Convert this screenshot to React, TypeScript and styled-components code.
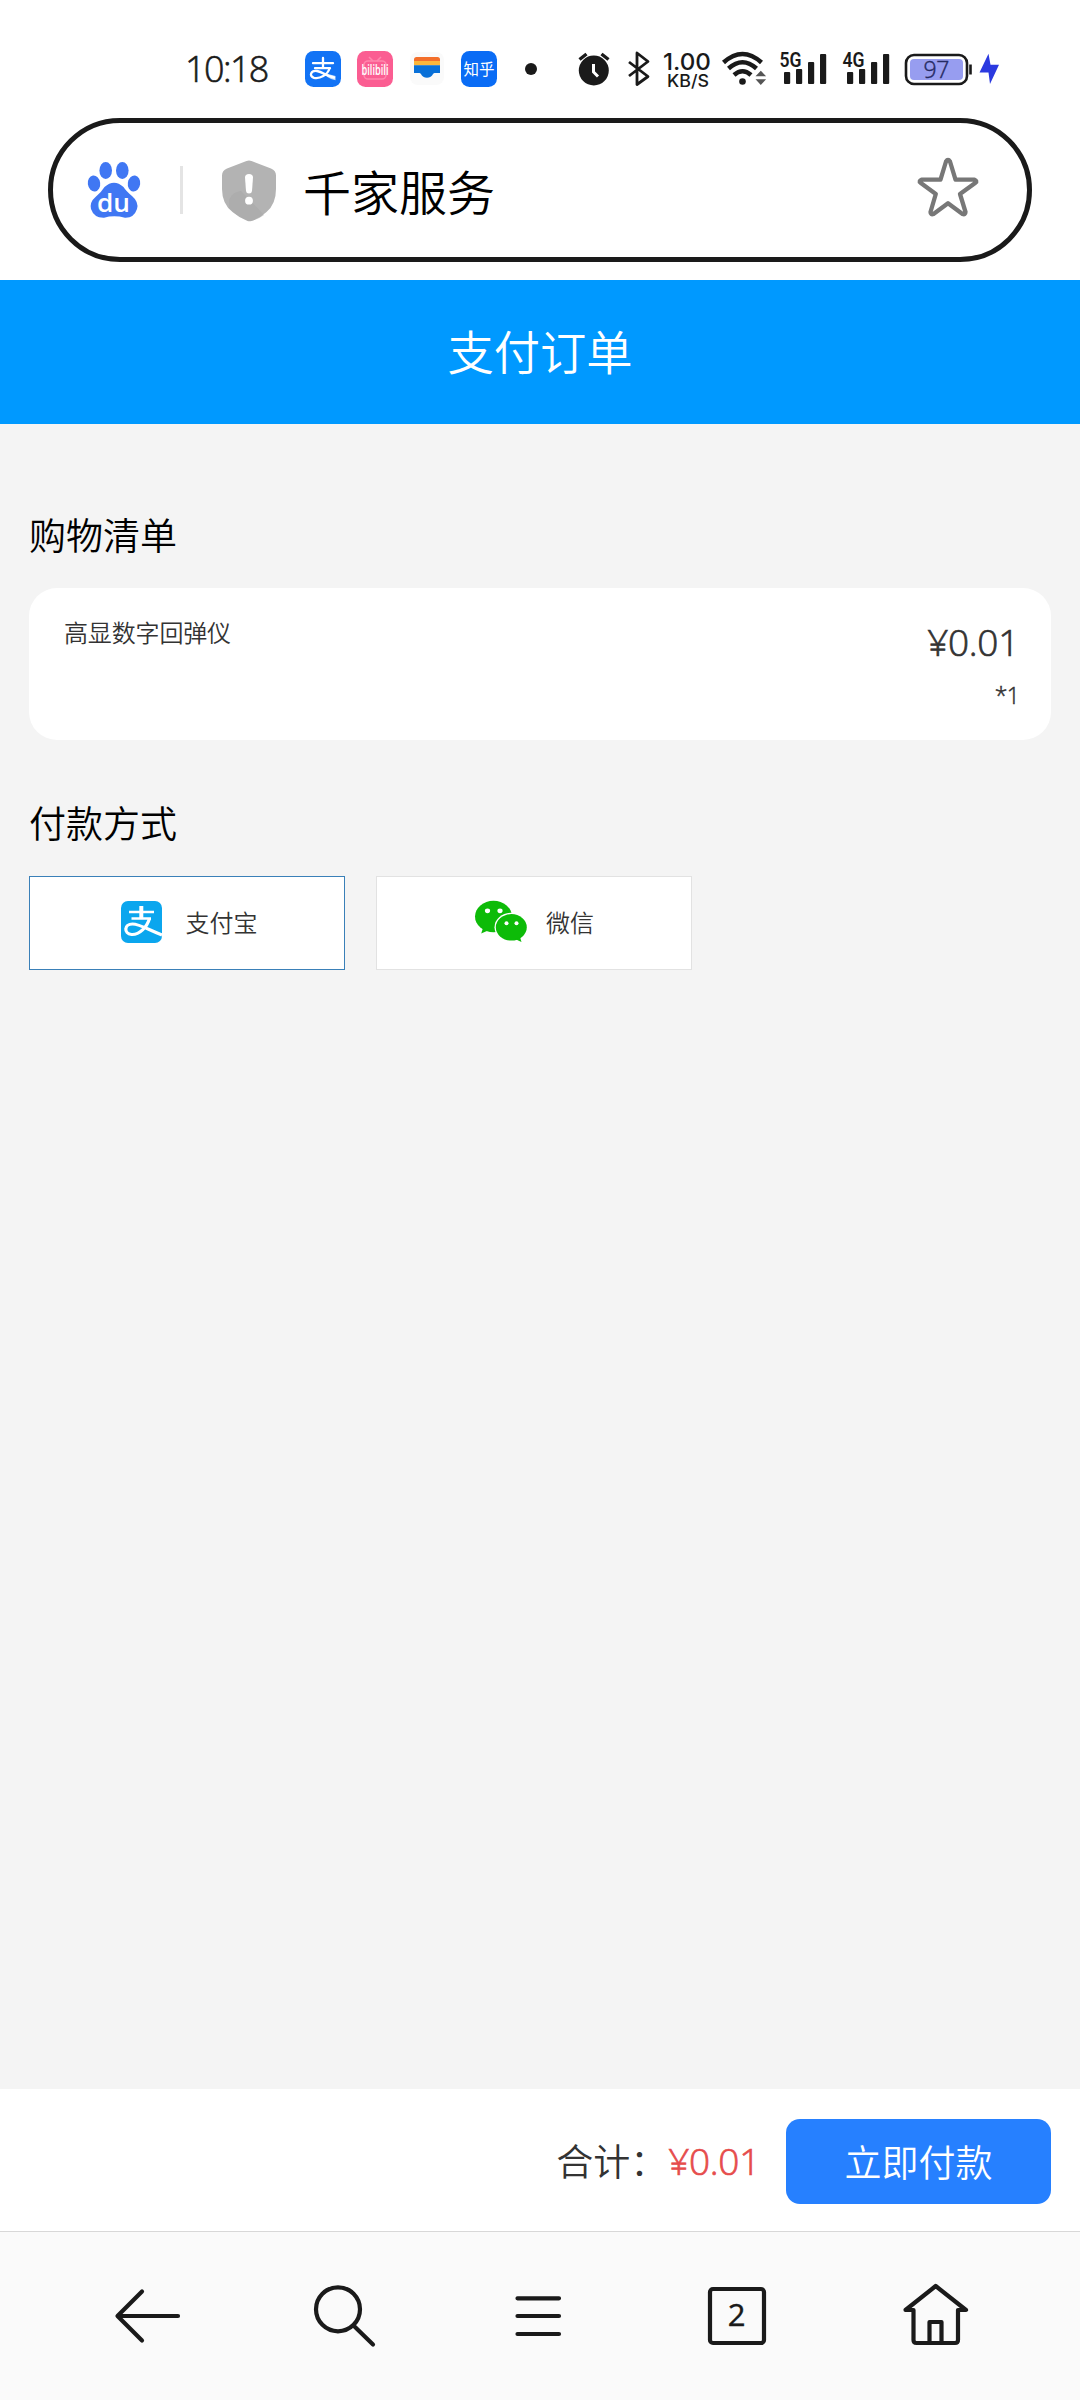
import React from "react";
import styled, { createGlobalStyle } from "styled-components";

const GlobalStyle = createGlobalStyle`
  * { box-sizing: border-box; }
  body {
    margin: 0;
    background: #f4f4f4;
    font-family: "Noto Sans", "Noto Sans CJK SC", sans-serif;
    font-weight: 350;
    color: #333;
  }
  button { font: inherit; padding: 0; border: 0; background: none; color: inherit; }
  svg { display: block; flex: none; overflow: visible; }
`;

const Screen = styled.div`
  display: flex;
  flex-direction: column;
  width: 1080px;
  height: 2400px;
  overflow: hidden;
`;

const Chrome = styled.header`
  height: 280px;
  background: #fff;
  padding: 50px 48px 0;
`;

const StatusBar = styled.div`
  display: flex;
  align-items: center;
  height: 38px;
  margin-bottom: 30px;
  padding-left: 137px;
  color: #1a1a1a;
`;

const Clock = styled.time`
  width: 120px;
  font-family: "Open Sans", sans-serif;
  font-size: 36px;
  line-height: 38px;
  letter-spacing: -1.6px;
  -webkit-text-stroke: 0.6px currentColor;
`;

const AppIcons = styled.div`
  display: flex;
  gap: 16px;
  width: 270px;
`;

const SearchBox = styled.div`
  display: flex;
  align-items: center;
  height: 144px;
  border: 5px solid #1a1a1a;
  border-radius: 72px;
  padding: 0 48px 0 33px;
`;

const Divider = styled.span`
  width: 3px;
  height: 48px;
  margin: 0 39px 0 38px;
  background: #e4e4e4;
`;

const SiteName = styled.span`
  flex: 1;
  margin-left: 27px;
  font-size: 48px;
  line-height: 60px;
  color: #000;
  padding-top: 6px;
`;

const TitleBar = styled.h1`
  display: flex;
  align-items: center;
  justify-content: center;
  height: 144px;
  margin: 0;
  padding-bottom: 4px;
  background: #0099ff;
  color: #fff;
  font-size: 46.3px;
  font-weight: 350;
`;

const Content = styled.main`
  flex: 1;
  padding: 84px 29px 0;
`;

const SectionTitle = styled.h2`
  margin: 0;
  height: 80px;
  line-height: 56px;
  font-size: 37px;
  font-weight: 350;
  color: #000;
`;

const ItemCard = styled.section`
  display: flex;
  justify-content: space-between;
  height: 152px;
  margin-bottom: 56px;
  padding: 26px 32px 0 35px;
  border-radius: 28px;
  background: #fff;
`;

const ItemName = styled.span`
  font-size: 24px;
  line-height: 38px;
  letter-spacing: -0.15px;
`;

const ItemFigures = styled.div`
  display: flex;
  flex-direction: column;
  align-items: flex-end;
  font-family: "Open Sans", sans-serif;
`;

const Price = styled.span<{ $accent?: boolean }>`
  font-family: "Open Sans", sans-serif;
  font-size: 37px;
  line-height: 56px;
  letter-spacing: -0.3px;
  color: ${(p) => (p.$accent ? "#e64c4c" : "#333")};
  -webkit-text-stroke: 0.7px currentColor;
`;

const Quantity = styled.span`
  font-size: 23px;
  line-height: 50px;
  letter-spacing: -0.8px;
  -webkit-text-stroke: 0.5px currentColor;
`;

const Methods = styled.div`
  display: flex;
  gap: 31px;
`;

const Method = styled.button<{ $selected?: boolean; $gap: number }>`
  display: flex;
  align-items: center;
  justify-content: center;
  gap: ${(p) => p.$gap}px;
  width: 316px;
  height: 94px;
  padding: 0 0 3px ${(p) => (p.$selected ? 4 : 1)}px;
  background: #fff;
  border: 1px solid ${(p) => (p.$selected ? "#3a80b8" : "#e2e2e2")};
  font-size: 24px;
`;

const PayBar = styled.footer`
  display: flex;
  align-items: center;
  justify-content: flex-end;
  height: 142px;
  padding-right: 29px;
  padding-top: 2px;
  background: #fff;
`;

const TotalLabel = styled.span`
  font-size: 37px;
  line-height: 56px;
  padding: 2px 1px 0 0;
`;

const PayButton = styled.button`
  width: 265px;
  height: 85px;
  margin-left: 26px;
  border-radius: 14px;
  background: #2680ff;
  color: #fff;
  font-size: 37px;
`;

const NavBar = styled.nav`
  display: grid;
  grid-template-columns: repeat(5, 196px);
  justify-content: center;
  align-items: center;
  justify-items: center;
  height: 169px;
  border-top: 1px solid #d8d8d8;
  background: #fafafa;
`;

const StarSlot = styled.span`
  padding-bottom: 6px;
`;

const AppTile = ({ fill, children }: { fill: string; children: React.ReactNode }) => (
  <svg width="36" height="36" viewBox="0 0 36 36">
    <rect width="36" height="36" rx="8.5" fill={fill} />
    {children}
  </svg>
);

const AlipayTile = () => (
  <AppTile fill="#1273f5">
    <g fill="none" stroke="#fff" strokeWidth="2.3" strokeLinecap="round">
      <path d="M8 12.2H28M18 7v10M10 17.2H25" />
      <path d="M24.5 17.5C22.5 24 15 28 9 26.8C3.500 25 6 19 12 20C18 21 22 25.500 29 26.500" />
    </g>
    <path d="M23 23l7.500 2v4.300q-5-1-9-3.800z" fill="#fff" opacity=".75" />
  </AppTile>
);

const BilibiliTile = () => (
  <AppTile fill="#fb5d92">
    <g fill="none" stroke="#ff86ad" strokeWidth="1.6">
      <rect x="7" y="10" width="22" height="18" rx="4" />
      <path d="M12 6l4 4M24 6l-4 4" />
    </g>
    <text x="18" y="24" textAnchor="middle" textLength="27" lengthAdjust="spacingAndGlyphs" fill="#fff" fontFamily="Open Sans, sans-serif" fontWeight="600" fontSize="15">bilibili</text>
  </AppTile>
);

const WalletTile = () => (
  <svg width="36" height="36" viewBox="0 0 36 36">
    <rect x="1" y="1" width="34" height="33" rx="8" fill="#fafafa" />
    <path d="M5 11V8.500q0-2.500 2.500-2.500h21q2.500 0 2.500 2.500V11z" fill="#f36f2b" />
    <path d="M5 10h26v4.500H5z" fill="#fcb73a" />
    <path d="M5 14.200h26V22h-5.500c-2 0-2 4.800-7.500 4.800s-5.500-4.800-7.500-4.800H5z" fill="#0870d8" />
  </svg>
);

const ZhihuTile = () => (
  <AppTile fill="#0a6cf5">
    <text x="18" y="23.600" textAnchor="middle" fill="#fff" fontFamily="Noto Sans CJK SC, sans-serif" fontWeight="400" fontSize="15.500">知乎</text>
  </AppTile>
);

const SignalBars = ({ x, label }: { x: number; label: string }) => (
  <g>
    <text x={x - 4.500} y="67" textLength="22" lengthAdjust="spacingAndGlyphs" fontFamily="Roboto, sans-serif" fontWeight="600" fontSize="20.500">{label}</text>
    <rect x={x} y="72" width="6.200" height="12" rx="1" />
    <rect x={x + 12} y="69" width="6.200" height="15" rx="1" />
    <rect x={x + 24} y="62" width="6.200" height="22" rx="1" />
    <rect x={x + 36} y="54" width="6.200" height="30" rx="1" />
  </g>
);

const SystemIcons = () => (
  <svg width="430" height="38" viewBox="575 50 430 38" fill="#1a1a1a">
    <circle cx="593.800" cy="70.500" r="15" />
    <path d="M579.500 59.500l7-5.500M608.500 59.500l-7-5.500" stroke="#1a1a1a" strokeWidth="3.400" />
    <path d="M593.500 64v8l4.500 4.500" fill="none" stroke="#fff" strokeWidth="3" />
    <path d="M629 62l19 14.500l-11 8V53l11 8.500L629 76" fill="none" stroke="#1a1a1a" strokeWidth="2.800" strokeLinejoin="round" />
    <text x="663" y="70.300" textLength="48" lengthAdjust="spacingAndGlyphs" fontFamily="Inter, sans-serif" fontWeight="500" fontSize="23.500">1.00</text>
    <text x="667" y="86.700" textLength="42" lengthAdjust="spacingAndGlyphs" fontFamily="Inter, sans-serif" fontWeight="500" fontSize="17">KB/S</text>
    <g fill="none" stroke="#1a1a1a" strokeWidth="4.500">
      <path d="M723.500 62.500Q742.500 45.500 761.500 62.500" />
      <path d="M728.500 68.500Q742.500 56 756.500 68.500" />
      <path d="M734 75Q742.500 67.500 751 75" />
    </g>
    <circle cx="742.500" cy="81.500" r="3.300" />
    <path d="M755.500 76.200l5.300-5.500l5.300 5.500zM755.500 79.300l5.300 5.700l5.300-5.700z" fill="#555" />
    <SignalBars x={784} label="5G" />
    <SignalBars x={847} label="4G" />
    <rect x="906" y="55" width="61" height="29" rx="8" fill="#fff" stroke="#1a1a1a" strokeWidth="2.600" />
    <rect x="910" y="59" width="53" height="21" rx="4" fill="#979df0" />
    <path d="M970.500 64.500v10" stroke="#1a1a1a" strokeWidth="2.600" />
    <text x="936.500" y="78" textAnchor="middle" textLength="26" fill="#252a63" stroke="#252a63" strokeWidth="0.400" fontFamily="Open Sans, sans-serif" fontWeight="350" fontSize="23">97</text>
    <path d="M988.500 53.800L979.500 72.500h9L990 84l9-19.300h-8.500z" fill="#2b3ae0" />
  </svg>
);

const BaiduLogo = () => (
  <svg width="56" height="60" viewBox="86 160 56 60" fill="#4077f3">
    <ellipse cx="105.700" cy="170.500" rx="6.300" ry="8.500" />
    <ellipse cx="122.300" cy="170.500" rx="6.300" ry="8.500" />
    <ellipse cx="94" cy="183.500" rx="6.200" ry="8" transform="rotate(-8 94 183.500)" />
    <ellipse cx="134" cy="183.500" rx="6.200" ry="8" transform="rotate(8 134 183.500)" />
    <path d="M104.500 187Q114 178.500 123.500 187Q126 191 132 196Q139 202 137 209Q134 218 125 217.700Q114 215 104 217.700Q94 218 91 209Q89.500 202 95.500 197Q101.500 192 104.500 187z" />
    <text x="113.500" y="212" textAnchor="middle" textLength="33" lengthAdjust="spacingAndGlyphs" fill="#fff" fontFamily="Open Sans, sans-serif" fontWeight="600" fontSize="25.500">du</text>
  </svg>
);

const ShieldIcon = () => (
  <svg width="54" height="61" viewBox="222 159 54 61">
    <path d="M246.500 160q2.500-1 5 0l19.500 7.500q5 2 5 7V188q0 15-9.500 23q-7 6.500-15 9q-2 .5-4 0q-8-3-15-9Q222 203 222 188V174.500q0-5 5-7z" fill="#b3b3b3" />
    <path d="M229 199Q232 191 241 190L264 214Q256 220 249 220Q236 215 229 207z" fill="#a8a8a8" opacity=".55" />
    <path d="M245 176.500q0-3.500 4-3.500t4 3.500l-1 13.500q-.3 2.500-3 2.500t-3-2.500z" fill="#fff" />
    <circle cx="249" cy="199.700" r="3.900" fill="#fff" />
  </svg>
);

const StarIcon = () => (
  <svg width="62" height="60" viewBox="917 156 62 60" fill="none" stroke="#777" strokeWidth="4.300" strokeLinejoin="round">
    <path d="M946 160.500q2-3 4 0L955.500 178.700H974.500q3 1.300 1 3L960 193L965.500 211q0 3-3 2L948 202.300L933.500 213q-3 1-3-2L935.800 193L920.500 181.700q-2-1.700 1-3H940.500z" />
  </svg>
);

const WechatIcon = () => (
  <svg width="52" height="42" viewBox="475 902 52 42">
    <g fill="#0dbb08">
      <ellipse cx="493.500" cy="917.500" rx="18.500" ry="15.700" />
      <path d="M483 929l-1.800 5.500l8-3.500z" />
    </g>
    <ellipse cx="511.300" cy="928.300" rx="16.800" ry="14.500" fill="#fff" />
    <g fill="#0dbb08">
      <ellipse cx="511.300" cy="928.300" rx="15.500" ry="13.200" />
      <path d="M515 940l6.500 3l-1.500-5z" />
    </g>
    <g fill="#fff">
      <ellipse cx="487.500" cy="911.800" rx="2.600" ry="2.400" />
      <ellipse cx="500" cy="911.800" rx="2.600" ry="2.400" />
      <circle cx="506.500" cy="924.300" r="2" />
      <circle cx="516.500" cy="924.300" r="2" />
    </g>
  </svg>
);

const AlipayIcon = () => (
  <svg width="41" height="42" viewBox="0 0 41 42">
    <rect width="41" height="42" rx="7" fill="#0ba6ee" />
    <g fill="none" stroke="#fff">
      <path d="M8 11H33M10.500 17.500H30" strokeWidth="2.400" />
      <path d="M20.300 5V17" strokeWidth="4" />
      <path d="M28.500 17.500C26 26 18.500 34 10.500 33.500C2.500 32.500 3 23 11.500 23C18.500 23 26 28 41 34" strokeWidth="3.200" />
    </g>
  </svg>
);

const NavIcon = ({ x, children }: { x: number; children: React.ReactNode }) => (
  <svg width="80" height="80" viewBox={`${x} 2276 80 80`} fill="none" stroke="#1a1a1a" strokeWidth="4.200" strokeLinecap="round" strokeLinejoin="round">
    {children}
  </svg>
);

export default function App() {
  return (
    <Screen>
      <GlobalStyle />
      <Chrome>
        <StatusBar>
          <Clock>10:18</Clock>
          <AppIcons>
            <AlipayTile />
            <BilibiliTile />
            <WalletTile />
            <ZhihuTile />
            <svg width="36" height="36"><circle cx="18" cy="18" r="6" fill="#1a1a1a" /></svg>
          </AppIcons>
          <SystemIcons />
        </StatusBar>
        <SearchBox>
          <BaiduLogo />
          <Divider />
          <ShieldIcon />
          <SiteName>千家服务</SiteName>
          <StarSlot><StarIcon /></StarSlot>
        </SearchBox>
      </Chrome>
      <TitleBar>支付订单</TitleBar>
      <Content>
        <SectionTitle>购物清单</SectionTitle>
        <ItemCard>
          <ItemName>高显数字回弹仪</ItemName>
          <ItemFigures>
            <Price>¥0.01</Price>
            <Quantity>*1</Quantity>
          </ItemFigures>
        </ItemCard>
        <SectionTitle>付款方式</SectionTitle>
        <Methods>
          <Method $selected $gap={24}>
            <AlipayIcon />
            <span>支付宝</span>
          </Method>
          <Method $gap={19}>
            <WechatIcon />
            <span>微信</span>
          </Method>
        </Methods>
      </Content>
      <PayBar>
        <TotalLabel>合计：</TotalLabel>
        <Price $accent>¥0.01</Price>
        <PayButton>立即付款</PayButton>
      </PayBar>
      <NavBar>
        <NavIcon x={108}><path d="M142 2291.500L117.500 2316L142 2340.500M118 2316H178" /></NavIcon>
        <NavIcon x={304}>
          <circle cx="338" cy="2309.300" r="22" />
          <path d="M354.500 2326.500L373 2344.500" />
        </NavIcon>
        <NavIcon x={500}><path d="M517.500 2298.300H559M517.500 2316H559M517.500 2334H559" /></NavIcon>
        <NavIcon x={696}>
          <rect x="710" y="2289" width="54" height="54" rx="3" />
          <text x="736.500" y="2326" textAnchor="middle" fill="#1a1a1a" stroke="#1a1a1a" strokeWidth="0.300" fontFamily="Noto Sans, sans-serif" fontWeight="400" fontSize="31">2</text>
        </NavIcon>
        <NavIcon x={892}>
          <path d="M913.500 2310H905.500L935.700 2286L966 2310H958V2340q0 3-3 3H916.500q-3 0-3-3zM929.500 2343V2322H941.500V2343" />
        </NavIcon>
      </NavBar>
    </Screen>
  );
}
